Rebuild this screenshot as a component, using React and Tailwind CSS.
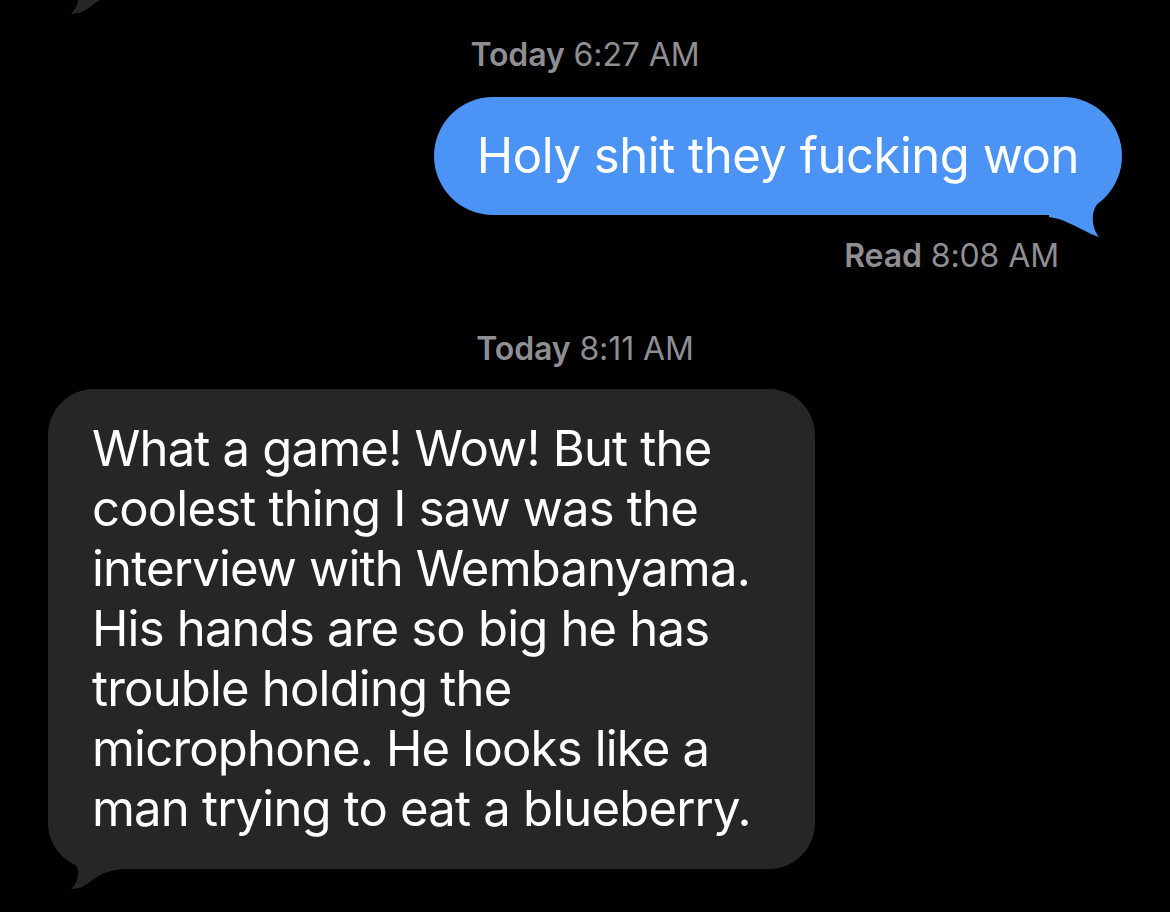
// Message thread: two iMessage-style bubbles on a black background.

const FONT = { fontFamily: "Inter, 'Noto Sans', sans-serif" };

function Stamp({ label, time, className = "" }) {
    return (
        <p className={`text-[32px] leading-[36px] text-[#8e8e93] tracking-[-0.1px] ${className}`}>
            <span className="font-semibold">{label}</span> {time}
        </p>
    );
}

function BlueTail() {
    return (
        <svg
            className="absolute right-[-2px] bottom-[-24px]"
            width="75"
            height="70"
            viewBox="0 0 75 70"
        >
            <path
                d="M0 0 L70 0 C66 20 46 30 44 46 C43 56 46 63 50 68 C40 65 24 55 10 50 L0 48 Z"
                fill="#4b93f4"
            />
        </svg>
    );
}

function GrayTail({ className = "" }) {
    return (
        <svg className={className} width="85" height="72" viewBox="0 0 85 72">
            <path
                d="M3 0 L85 0 L85 50 C70 50 58 52 45 63 C39 68 32 70 26 70 C32 64 35 56 32 48 C27 40 8 30 3 0 Z"
                fill="#262629"
            />
        </svg>
    );
}

export default function App() {
    const lines = [
        "What a game! Wow! But the",
        "coolest thing I saw was the",
        "interview with Wembanyama.",
        "His hands are so big he has",
        "trouble holding the",
        "microphone. He looks like a",
        "man trying to eat a blueberry.",
    ];

    return (
        <div className="relative h-[912px] w-full overflow-hidden bg-black" style={FONT}>
            {/* tail of the previous bubble, cut off by the top edge */}
            <GrayTail className="absolute left-[45px] top-[-56px]" />

            <div className="flex flex-col pt-[37px]">
                <Stamp label="Today" time="6:27 AM" className="text-center" />

                <div className="mt-[24px] flex justify-end pr-[48px]">
                    <div className="relative">
                        <div className="relative z-10 flex h-[118px] items-center rounded-full bg-[#4b93f4] px-[43px]">
                            <span className="text-[49px] leading-[58px] text-white tracking-[-0.45px]">
                                Holy shit they fucking won
                            </span>
                        </div>
                        <BlueTail />
                    </div>
                </div>

                <Stamp label="Read" time="8:08 AM" className="mt-[23px] pr-[111px] text-right" />

                <Stamp label="Today" time="8:11 AM" className="mt-[57px] text-center" />

                <div className="mt-[22px] pl-[48px]">
                    <div className="relative w-[767px]">
                        <div className="relative z-10 rounded-[46px] bg-[#262629] py-[30px] pl-[44px]">
                            {lines.map((line) => (
                                <p key={line} className="text-[49px] leading-[60px] text-white tracking-[-0.8px]">
                                    {line}
                                </p>
                            ))}
                        </div>
                        <GrayTail className="absolute left-[-3px] bottom-[-22px]" />
                    </div>
                </div>
            </div>
        </div>
    );
}
